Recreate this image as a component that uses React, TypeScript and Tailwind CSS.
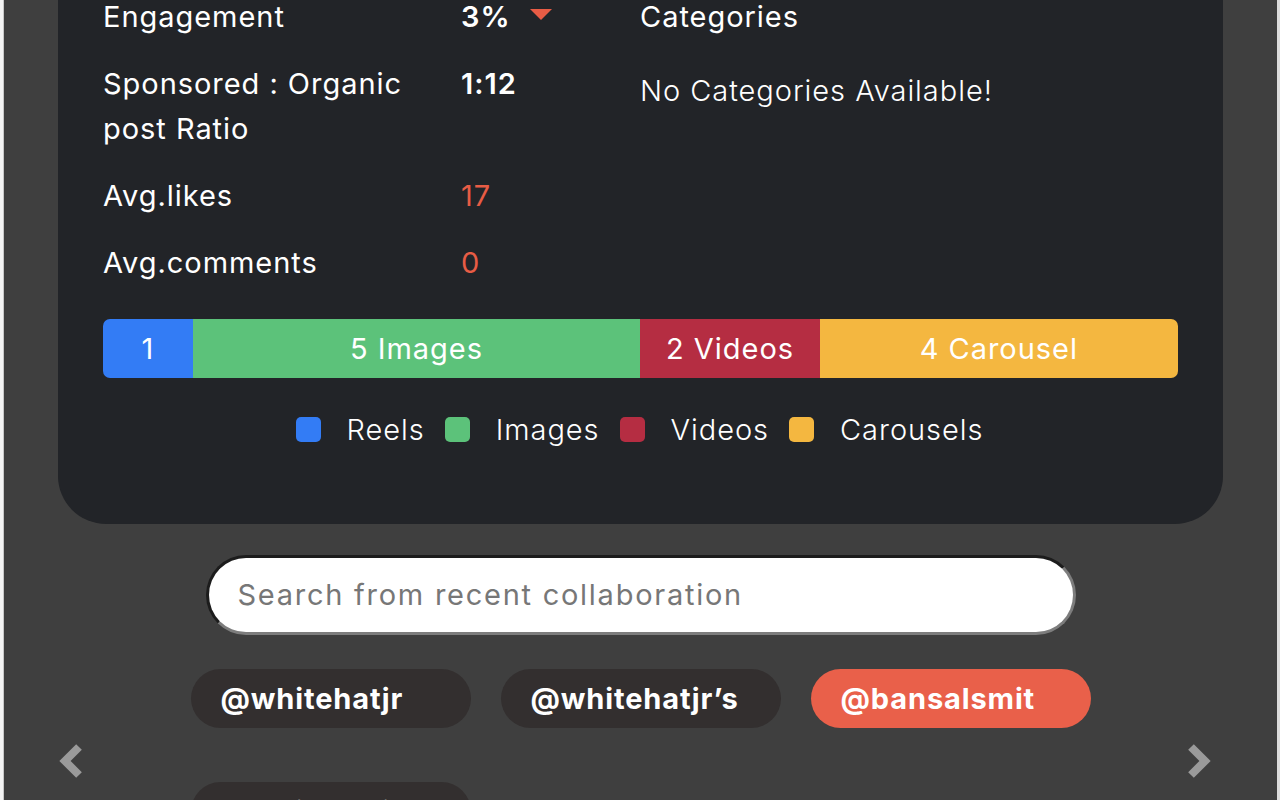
import React from "react";

const font = { fontFamily: "Inter, 'Noto Sans', sans-serif" };

const segments = [
  { count: 1, label: "1", color: "bg-[#337cf5]" },
  { count: 5, label: "5 Images", color: "bg-[#5cc27a]" },
  { count: 2, label: "2 Videos", color: "bg-[#b52d42]" },
  { count: 4, label: "4 Carousel", color: "bg-[#f4b740]" },
];

const legend = [
  { label: "Reels", color: "bg-[#337cf5]" },
  { label: "Images", color: "bg-[#5cc27a]" },
  { label: "Videos", color: "bg-[#b52d42]" },
  { label: "Carousels", color: "bg-[#f4b740]" },
];

const Chevron = ({ dir }: { dir: "left" | "right" }) => (
  <svg width="28" height="34" viewBox="0 0 28 34">
    <polyline
      points={dir === "left" ? "22,3 8,17 22,31" : "6,3 20,17 6,31"}
      fill="none"
      stroke="#9a9a9a"
      strokeWidth="8"
      strokeLinejoin="miter"
    />
  </svg>
);

export default function App() {
  const total = segments.reduce((s, x) => s + x.count, 0);
  return (
    <div className="h-screen w-full overflow-hidden flex bg-white tracking-[0.06em]" style={font}>
      {/* page peeking behind the modal */}
      <div className="w-[4px] bg-[#f4f4f4] border-r border-[#c8c8c8]" />
      <div className="relative flex-1 bg-[#3f3f3f] text-white">
        {/* Stats card */}
        <div className="mx-[54px] rounded-b-[48px] bg-[#222428] px-[45px] pb-[72px]">
          <div className="-mt-[6px] flex text-[29px] leading-[45px]">
            <div className="w-[537px] flex flex-col gap-[22px]">
              <div className="flex">
                <span className="w-[358px]">Engagement</span>
                <span className="flex items-center font-semibold">
                  3%
                  <svg width="22" height="12" viewBox="0 0 22 12" className="ml-[19px] -mt-[4px]">
                    <polygon points="0,0 22,0 11,11" fill="#e85c45" />
                  </svg>
                </span>
              </div>
              <div className="flex">
                <span className="w-[358px] pr-[30px]">Sponsored : Organic post Ratio</span>
                <span className="font-semibold">1:12</span>
              </div>
              <div className="flex">
                <span className="w-[358px]">Avg.likes</span>
                <span className="text-[#e85c45]">17</span>
              </div>
              <div className="flex">
                <span className="w-[358px]">Avg.comments</span>
                <span className="text-[#e85c45]">0</span>
              </div>
            </div>
            <div className="flex-1 flex flex-col gap-[29px]">
              <span>Categories</span>
              <span className="font-light">No Categories Available!</span>
            </div>
          </div>

          {/* Content split bar */}
          <div className="mt-[34px] flex h-[59px] rounded-[7px] overflow-hidden text-[29px]">
            {segments.map((s) => (
              <div
                key={s.label}
                className={`${s.color} flex items-center justify-center`}
                style={{ width: `${(s.count / total) * 100}%` }}
              >
                {s.label}
              </div>
            ))}
          </div>

          {/* Legend */}
          <div className="mt-[29px] flex justify-center pl-[18px] text-[29px] leading-[45px] font-light">
            {legend.map((l) => (
              <div key={l.label} className="flex items-center mr-[20px]">
                <span className={`${l.color} w-[25px] h-[25px] rounded-[5px] mr-[26px]`} />
                {l.label}
              </div>
            ))}
          </div>
        </div>

        {/* Search */}
        <div className="mt-[31px] flex justify-center">
          <div className="w-[870px] h-[80px] rounded-full bg-white border-[3px] border-t-[#1c1c1c] border-l-[#1c1c1c] border-r-[#7d7d7d] border-b-[#7d7d7d] flex items-center px-[29px]">
            <input
              className="w-full bg-transparent outline-none text-[29px] tracking-[0.06em] text-black placeholder:text-[#777]"
              placeholder="Search from recent collaboration"
              style={font}
            />
          </div>
        </div>

        {/* Recent collaborations */}
        <div className="mt-[34px] mx-auto w-[900px] flex flex-wrap gap-x-[30px] gap-y-[54px]">
          {["@whitehatjr", "@whitehatjr’s", "@bansalsmit", "@whitehatjr"].map((c, i) => (
            <div
              key={i}
              className={`w-[280px] h-[59px] rounded-full flex items-center px-[30px] text-[29px] font-bold tracking-[0.03em] ${
                i === 2 ? "bg-[#e9604a]" : "bg-[#332f2f]"
              }`}
            >
              {c}
            </div>
          ))}
        </div>

        {/* Carousel arrows */}
        <button className="absolute left-[53px] top-[744px]">
          <Chevron dir="left" />
        </button>
        <button className="absolute right-[64px] top-[744px]">
          <Chevron dir="right" />
        </button>
      </div>
      <div className="w-[3px] bg-[#dcdcdc]" />
    </div>
  );
}
